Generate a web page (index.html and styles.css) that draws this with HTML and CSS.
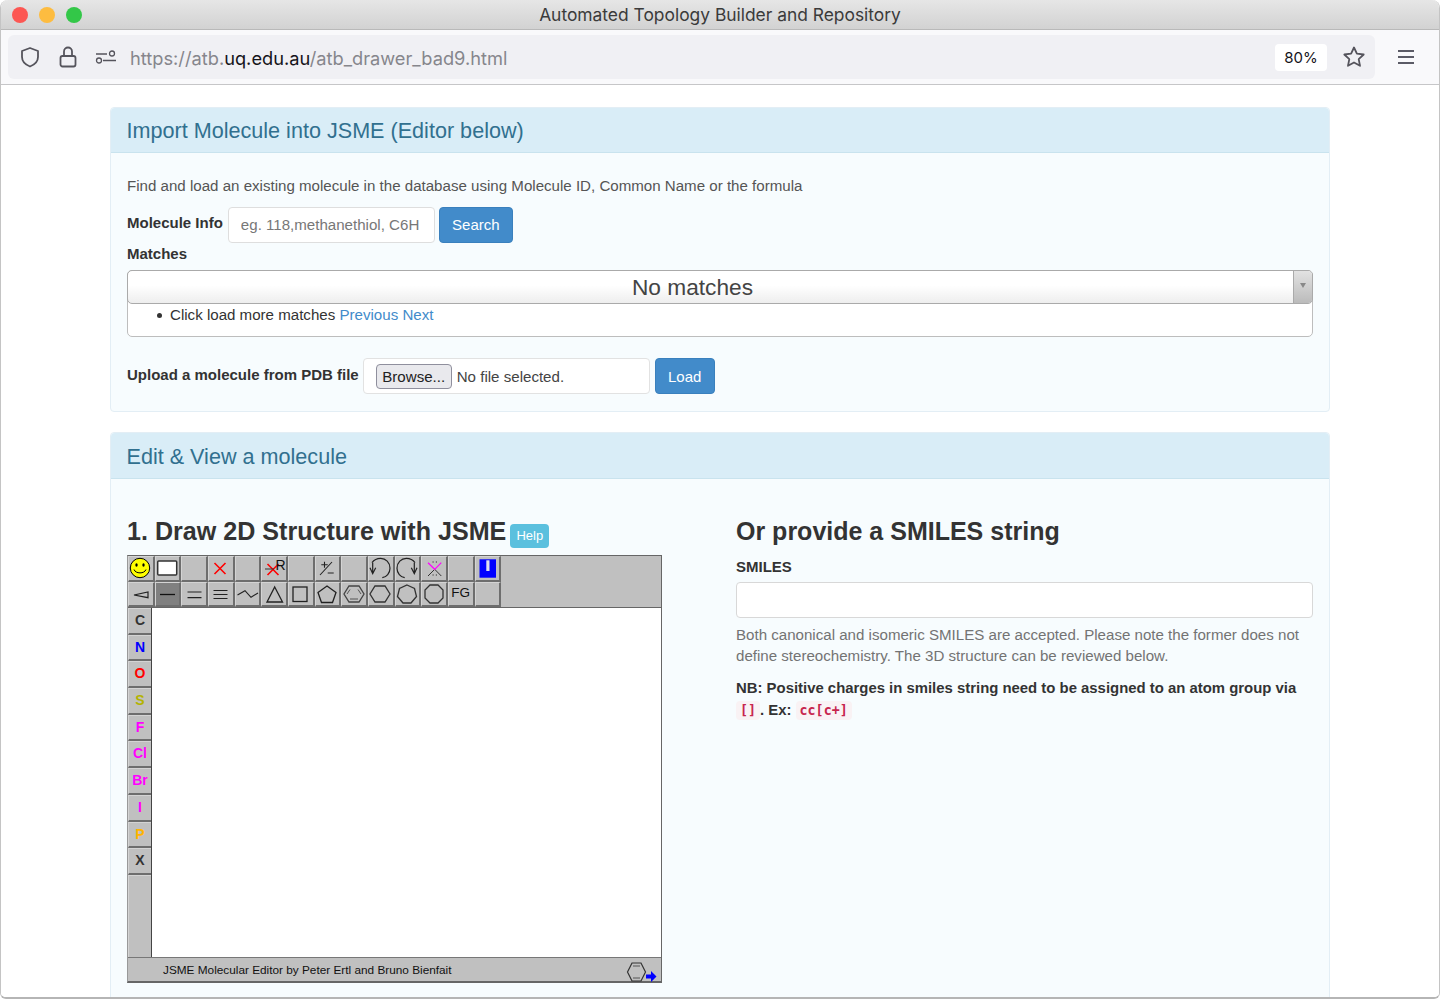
FILE: index.html
```html
<!DOCTYPE html>
<html lang="en">
<head>
    <meta charset="UTF-8">
    <title>Automated Topology Builder and Repository</title>
    <link rel="stylesheet" href="styles.css">
</head>
<body>
    <div class="window">
        <div class="titlebar">
            <div class="lights">
                <span class="light light-red"></span>
                <span class="light light-yellow"></span>
                <span class="light light-green"></span>
            </div>
            <div class="window-title">Automated Topology Builder and Repository</div>
        </div>
        <div class="toolbar">
            <div class="urlbar">
                <svg class="tool-icon" width="24" height="24" viewBox="0 0 24 24"><path d="M12 3l8 3v6c0 4.500-3.200 7.600-8 9.500C7.200 19.600 4 16.500 4 12V6z" fill="none" stroke="#55545c" stroke-width="1.800" stroke-linejoin="round"/></svg>
                <svg class="tool-icon lock" width="24" height="24" viewBox="0 0 24 24"><rect x="4.500" y="11" width="15" height="10.500" rx="2" fill="none" stroke="#55545c" stroke-width="1.800"/><path d="M8 11V6.500a4 4 0 0 1 8 0V11" fill="none" stroke="#55545c" stroke-width="1.800"/></svg>
                <svg class="tool-icon perm" width="22" height="16" viewBox="0 0 22 16"><path d="M1 5h11M8 11.500h13" stroke="#55545c" stroke-width="1.400"/><circle cx="17" cy="4.500" r="2.500" fill="none" stroke="#55545c" stroke-width="1.300"/><circle cx="4" cy="11.500" r="2.500" fill="none" stroke="#55545c" stroke-width="1.300"/></svg>
                <div class="url">https://atb.<b>uq.edu.au</b>/atb_drawer_bad9.html</div>
                <div class="zoom-level">80%</div>
                <svg class="star" width="24" height="24" viewBox="0 0 24 24"><path d="M12 2.500l2.900 6.200 6.800.8-5 4.600 1.300 6.700-6-3.300-6 3.300 1.300-6.700-5-4.600 6.800-.8z" fill="none" stroke="#55545c" stroke-width="1.800" stroke-linejoin="round"/></svg>
            </div>
            <div class="menu-btn"><span></span><span></span><span></span></div>
        </div>

        <div class="page">
            <section class="panel panel-import">
                <div class="panel-heading">Import Molecule into JSME (Editor below)</div>
                <div class="panel-body">
                    <p class="intro">Find and load an existing molecule in the database using Molecule ID, Common Name or the formula</p>
                    <div class="form-row search-row">
                        <label class="label">Molecule Info</label>
                        <input class="text-input mol-input" type="text" placeholder="eg. 118,methanethiol, C6H">
                        <button class="btn">Search</button>
                    </div>
                    <div class="label matches-label">Matches</div>
                    <div class="matches">
                        <div class="combo">
                            <div class="combo-text">No matches</div>
                            <div class="combo-arrow"><i></i></div>
                        </div>
                        <ul class="more">
                            <li>Click load more matches <a href="#">Previous</a> <a href="#">Next</a></li>
                        </ul>
                    </div>
                    <div class="form-row upload-row">
                        <label class="label">Upload a molecule from PDB file</label>
                        <div class="file-box"><span class="browse">Browse...</span><span>No file selected.</span></div>
                        <button class="btn load-btn">Load</button>
                    </div>
                </div>
            </section>

            <section class="panel panel-edit">
                <div class="panel-heading">Edit &amp; View a molecule</div>
                <div class="panel-body edit-body">
                    <div class="col-left">
                        <h3>1. Draw 2D Structure with JSME <span class="help">Help</span></h3>
                        <div class="jsme">
                            <div class="jsme-top">
                                <div class="jsme-row">
                                    <div class="cell"><svg width="24" height="24" viewBox="0 0 24 24"><circle cx="12" cy="12" r="9.700" fill="#ff0" stroke="#000"/><ellipse cx="8.500" cy="9" rx="1.200" ry="1.700"/><ellipse cx="15.500" cy="9" rx="1.200" ry="1.700"/><path d="M6 13.500c1.500 4.500 10.500 4.500 12 0" fill="none" stroke="#000"/></svg></div>
                                    <div class="cell"><svg width="24" height="24" viewBox="0 0 24 24"><rect x="2.700" y="5" width="19" height="14" rx="1" fill="#fff" stroke="#333" stroke-width="1.500"/></svg></div>
                                    <div class="cell"></div>
                                    <div class="cell"><svg width="24" height="24" viewBox="0 0 24 24"><path d="M6.500 7l11 11M17.500 7l-11 11" stroke="#f00" stroke-width="1.600"/></svg></div>
                                    <div class="cell"></div>
                                    <div class="cell"><svg width="24" height="24" viewBox="0 0 24 24"><path d="M5.500 8l11 11M16.500 8L5.500 19" stroke="#f00" stroke-width="1.600"/><path d="M3 13h9" stroke="#333"/><text x="13.500" y="14" class="cell-r">R</text></svg></div>
                                    <div class="cell"></div>
                                    <div class="cell"><svg width="24" height="24" viewBox="0 0 24 24"><path d="M9.500 5.700v6M6.300 8.700h6.400M12.700 17h6M17 6L5 19" stroke="#222" stroke-width="1.100"/></svg></div>
                                    <div class="cell"></div>
                                    <div class="cell"><svg width="24" height="24" viewBox="0 0 24 24"><path d="M4 6.700C6 3.800 9 2.300 12.700 2.300c5 0 9.300 4.400 9.300 10 0 5-3.500 8.800-7.700 9.400" fill="none" stroke="#222" stroke-width="1.200"/><path d="M4.700 6.700v11M2 11.700l2.700 6 3-6" fill="none" stroke="#222" stroke-width="1.200"/></svg></div>
                                    <div class="cell"><svg width="24" height="24" viewBox="0 0 24 24"><path d="M20 6.700C18 3.800 15 2.300 11.300 2.300c-5 0-9.300 4.400-9.300 10 0 5 3.500 8.800 7.700 9.400" fill="none" stroke="#222" stroke-width="1.200"/><path d="M19.300 6.700v11M22 11.700l-2.700 6-3-6" fill="none" stroke="#222" stroke-width="1.200"/></svg></div>
                                    <div class="cell"><svg width="24" height="24" viewBox="0 0 24 24"><path d="M12.700 13.300L6 20M12.700 13.300L19.300 20" stroke="#333"/><path d="M6 6.700l6.700 6.600 6.600-6.600" fill="none" stroke="#f0f" stroke-width="1.200"/><path d="M10.500 6h1.200M13.800 6H15M10.500 19h1.200M13.800 19H15" stroke="#333"/></svg></div>
                                    <div class="cell"></div>
                                    <div class="cell"><svg width="24" height="24" viewBox="0 0 24 24"><rect x="4.500" y="3.300" width="16.500" height="18.400" fill="#00f"/><rect x="11.300" y="4.300" width="3.200" height="10.700" fill="#dde"/></svg></div>
                                </div>
                                <div class="jsme-row">
                                    <div class="cell"><svg width="24" height="24" viewBox="0 0 24 24"><path d="M6 13l14-3v5.700z" fill="none" stroke="#222" stroke-width="1.200"/></svg></div>
                                    <div class="cell cell-on"><svg width="24" height="24" viewBox="0 0 24 24"><path d="M5 12.500h15" stroke="#111" stroke-width="1.300"/></svg></div>
                                    <div class="cell"><svg width="24" height="24" viewBox="0 0 24 24"><path d="M5.500 10h14M5.500 15.700h14" stroke="#222" stroke-width="1.200"/></svg></div>
                                    <div class="cell"><svg width="24" height="24" viewBox="0 0 24 24"><path d="M5.500 8.500h14M5.500 12.500h14M5.500 16.500h14" stroke="#222" stroke-width="1.200"/></svg></div>
                                    <div class="cell"><svg width="24" height="24" viewBox="0 0 24 24"><path d="M2.500 13l7.500-4.300 6 6.600 7-4.300" fill="none" stroke="#222" stroke-width="1.100"/></svg></div>
                                    <div class="cell"><svg width="24" height="24" viewBox="0 0 24 24"><path d="M12.700 5L20.500 20H5z" fill="none" stroke="#222" stroke-width="1.300"/></svg></div>
                                    <div class="cell"><svg width="24" height="24" viewBox="0 0 24 24"><rect x="5" y="5" width="14" height="14.500" fill="none" stroke="#222" stroke-width="1.300"/></svg></div>
                                    <div class="cell"><svg width="24" height="24" viewBox="0 0 24 24"><path d="M12 4l9 6.500-3.500 10h-11L3 10.500z" fill="none" stroke="#222" stroke-width="1.300"/></svg></div>
                                    <div class="cell"><svg width="24" height="24" viewBox="0 0 24 24"><path d="M7 4h10l5 8-5 8H7l-5-8z" fill="none" stroke="#444" stroke-width="1.300"/><path d="M8 7.500l-3 4.500M16 7.500l3 4.500M8 17h8" stroke="#555"/></svg></div>
                                    <div class="cell"><svg width="24" height="24" viewBox="0 0 24 24"><path d="M7 4h10l5 8-5 8H7l-5-8z" fill="none" stroke="#333" stroke-width="1.300"/></svg></div>
                                    <div class="cell"><svg width="24" height="24" viewBox="0 0 24 24"><path d="M12 3l7.500 3.500 2 8-5.500 6.500H8l-5.500-6.500 2-8z" fill="none" stroke="#333" stroke-width="1.300"/></svg></div>
                                    <div class="cell"><svg width="24" height="24" viewBox="0 0 24 24"><path d="M8 3h8l5 5v8l-5 5H8l-5-5V8z" fill="none" stroke="#333" stroke-width="1.300"/></svg></div>
                                    <div class="cell cell-fg">FG</div>
                                    <div class="cell"></div>
                                </div>
                            </div>
                            <div class="jsme-mid">
                                <div class="jsme-atoms">
                                    <div class="atom atom-c">C</div>
                                    <div class="atom atom-n">N</div>
                                    <div class="atom atom-o">O</div>
                                    <div class="atom atom-s">S</div>
                                    <div class="atom atom-hal">F</div>
                                    <div class="atom atom-hal">Cl</div>
                                    <div class="atom atom-hal">Br</div>
                                    <div class="atom atom-hal">I</div>
                                    <div class="atom atom-p">P</div>
                                    <div class="atom atom-c">X</div>
                                    <div class="atom atom-rest"></div>
                                </div>
                                <div class="jsme-canvas"></div>
                            </div>
                            <div class="jsme-foot">
                                <span>JSME Molecular Editor by Peter Ertl and Bruno Bienfait</span>
                                <svg width="32" height="24" viewBox="0 0 32 24"><path d="M6 5h9l4.500 9-4.500 9H6l-4.500-9z" fill="none" stroke="#333" stroke-width="1.200"/><path d="M7 8h7M7 20h7" stroke="#555"/><path d="M20 16.500h5V13l5.500 5.500-5.500 5.500v-3.500h-5z" fill="#00f"/></svg>
                            </div>
                        </div>
                    </div>
                    <div class="col-right">
                        <h3>Or provide a SMILES string</h3>
                        <div class="label smiles-label">SMILES</div>
                        <input class="text-input smiles-input" type="text">
                        <p class="hint">Both canonical and isomeric SMILES are accepted. Please note the former does not define stereochemistry. The 3D structure can be reviewed below.</p>
                        <p class="note">NB: Positive charges in smiles string need to be assigned to an atom group via <code>[]</code>. Ex: <code>cc[c+]</code></p>
                    </div>
                </div>
            </section>
        </div>
    </div>
</body>
</html>
```

FILE: styles.css
```css
html, body {
    margin: 0;
    height: 100%;
    overflow: hidden;
}

body {
    font-family: "Liberation Sans", Arial, sans-serif;
    font-size: 15.100px;
    color: #333;
    background-color: #fff;
}

.window {
    height: 999px;
    box-sizing: border-box;
    border: 1px solid #c4c4c4;
    border-top: none;
    border-bottom: 2px solid #b5b5b5;
    border-radius: 8px 8px 6px 6px;
    overflow: hidden;
}

/* browser chrome */
.titlebar {
    height: 30px;
    display: grid;
    grid-template-columns: 1fr auto 1fr;
    align-items: center;
    box-sizing: border-box;
    background: linear-gradient(#e6e6e6, #d2d2d2);
    border-bottom: 1px solid #b9b9b9;
}

.lights {
    padding: 1px 0 0 11px;
    display: flex;
    gap: 11px;
}

.light {
    width: 16px;
    height: 16px;
    border-radius: 50%;
}

.light-red { background-color: #fc5753; }
.light-yellow { background-color: #fdbc40; }
.light-green { background-color: #33c748; }

.window-title {
    font-family: "Inter", "Liberation Sans", sans-serif;
    font-size: 17.400px;
    color: #3b3b3b;
}

.toolbar {
    height: 55px;
    box-sizing: border-box;
    padding: 5px 0 5px 7px;
    display: flex;
    align-items: center;
    background-color: #f9f9fb;
    border-bottom: 1px solid #c6c6c8;
}

.urlbar {
    width: 1367px;
    height: 44px;
    box-sizing: border-box;
    padding: 0 9px 0 10px;
    display: flex;
    align-items: center;
    background-color: #f0f0f4;
    border-radius: 6px;
}

.tool-icon { flex: none; }
.lock { margin-left: 14px; }
.perm { margin-left: 15px; }

.url {
    margin: 1px 0 0 13px;
    flex: 1;
    font-family: "Inter", "Liberation Sans", sans-serif;
    font-size: 18.250px;
    color: #86868c;
}

.url b {
    font-weight: 400;
    color: #15141a;
}

.zoom-level {
    width: 52px;
    height: 27px;
    line-height: 27px;
    text-align: center;
    font-family: "Inter", "Liberation Sans", sans-serif;
    font-size: 15px;
    color: #15141a;
    background-color: #fff;
    border-radius: 4px;
}

.star { margin-left: 15px; }

.menu-btn {
    margin-left: 23px;
    width: 16px;
    display: flex;
    flex-direction: column;
    gap: 4px;
}

.menu-btn span {
    height: 2px;
    background-color: #5b5b66;
}

/* page */
.page {
    padding: 22px 109px 0;
    background-color: #fff;
}

.panel {
    background-color: #f7fcfe;
    border: 1px solid #e3eef5;
    border-radius: 4px;
}

.panel-import { height: 305px; box-sizing: border-box; }

.panel-edit {
    margin-top: 20px;
    height: 600px;
}

.panel-heading {
    height: 44px;
    line-height: 46px;
    padding-left: 15.500px;
    font-size: 21.600px;
    color: #31708f;
    background-color: #d9edf7;
    border-bottom: 1px solid #c9e3ee;
    border-radius: 4px 4px 0 0;
}

.panel-edit .panel-heading {
    height: 45px;
    line-height: 47px;
}

.panel-body {
    padding: 0 16px;
}

.intro {
    margin: 0;
    padding-top: 25px;
    line-height: 16px;
    color: #555;
}

.form-row {
    display: flex;
    align-items: flex-start;
}

.search-row {
    margin-top: 13px;
}

.label {
    font-size: 15px;
    font-weight: 700;
    color: #333;
    line-height: 17px;
}

.search-row .label {
    margin-top: 7px;
    margin-right: 5px;
}

.text-input {
    box-sizing: border-box;
    height: 36px;
    padding: 0 12px 2px;
    font-family: inherit;
    font-size: 15.100px;
    background-color: #fff;
    border: 1px solid #dedede;
    border-radius: 4px;
}

.text-input::placeholder {
    color: #777;
    opacity: 1;
}

.mol-input {
    width: 207px;
}

.btn {
    margin-left: 4px;
    height: 36px;
    width: 74px;
    padding: 0 0 2px;
    font-family: inherit;
    font-size: 15px;
    color: #fff;
    background-color: #428bca;
    border: 1px solid #3a80bd;
    border-radius: 4px;
}

.matches-label {
    margin-top: 2px;
}

.matches {
    margin-top: 8px;
    height: 67px;
    box-sizing: border-box;
    border: 1px solid #bdbdbd;
    border-radius: 5px;
    background-color: #fff;
}

.combo {
    margin: -1px;
    height: 34px;
    display: flex;
    box-sizing: border-box;
    border: 1px solid #aaa;
    border-radius: 5px;
    background: linear-gradient(#fff 45%, #eee);
    overflow: hidden;
}

.combo-text {
    flex: 1;
    padding-right: 36px;
    line-height: 33px;
    text-align: center;
    font-size: 22.700px;
    color: #444;
}

.combo-arrow {
    width: 19px;
    border-left: 1px solid #aaa;
    background: linear-gradient(#e2e2e2, #bbb);
    display: flex;
    justify-content: center;
    padding-top: 12px;
    box-sizing: border-box;
}

.combo-arrow i {
    width: 0;
    height: 0;
    border: 3.500px solid transparent;
    border-top: 5px solid #888;
}

.more {
    margin: 0;
    padding: 3px 0 0 42px;
    line-height: 17px;
    color: #333;
    list-style: none;
}

.more li::before {
    content: "";
    display: inline-block;
    width: 5px;
    height: 5px;
    margin: 0 8px 2px -13px;
    border-radius: 50%;
    background-color: #333;
}

.more a {
    color: #428bca;
    text-decoration: none;
}

.upload-row {
    margin-top: 21px;
}

.upload-row .label {
    margin-top: 8px;
    margin-right: 4px;
}

.file-box {
    box-sizing: border-box;
    width: 287px;
    height: 36px;
    padding-left: 12px;
    display: flex;
    align-items: center;
    gap: 5px;
    background-color: #fff;
    border: 1px solid #e2e2e2;
    border-radius: 4px;
    color: #444;
}

.browse {
    box-sizing: border-box;
    width: 76px;
    height: 25px;
    line-height: 23px;
    text-align: center;
    color: #222;
    background-color: #e9e9ed;
    border: 1px solid #8f8f9d;
    border-radius: 4px;
}

.load-btn {
    margin-left: 5px;
    width: 60px;
    height: 36px;
    padding: 0;
}

.edit-body {
    display: flex;
}

.col-left {
    width: 609px;
    flex: none;
}

.col-right {
    width: 577px;
    flex: none;
}

h3 {
    margin: 35px 0 0;
    height: 34px;
    line-height: 34px;
    font-size: 25px;
    font-weight: 700;
    color: #333;
}

.col-left h3 {
    display: flex;
    align-items: center;
    gap: 4px;
    font-size: 25.100px;
}

.help {
    margin-top: 9px;
    width: 39px;
    height: 24px;
    line-height: 24px;
    text-align: center;
    font-size: 13px;
    font-weight: 400;
    color: #fff;
    background-color: #5bc0de;
    border-radius: 4px;
}

/* jsme applet */
.jsme {
    margin-top: 7px;
    width: 535px;
    height: 428px;
    box-sizing: border-box;
    display: flex;
    flex-direction: column;
    background-color: #c0c0c0;
    border: 1px solid #666;
    border-left-color: #999;
    border-bottom-width: 2px;
}

.jsme-top {
    height: 52px;
    flex: none;
    box-sizing: border-box;
    display: flex;
    flex-direction: column;
    border-bottom: 1px solid #666;
}

.jsme-row {
    display: flex;
    height: 25.500px;
}

.cell {
    box-sizing: border-box;
    width: 26.670px;
    height: 25.500px;
    flex: none;
    display: flex;
    align-items: center;
    justify-content: center;
    background-color: #c0c0c0;
    border-style: solid;
    border-width: 1px 2px 2px 1px;
    border-color: #d4d4d4 #6e6e6e #6e6e6e #d4d4d4;
}

.cell-on {
    background-color: #808080;
}

.cell svg {
    display: block;
    flex: none;
    margin-left: -1px;
}

.cell-r {
    font-size: 14px;
    fill: #111;
}

.cell-fg {
    padding-bottom: 3px;
    font-size: 13.500px;
    color: #111;
}

.jsme-mid {
    flex: 1;
    display: flex;
    min-height: 0;
}

.jsme-atoms {
    width: 23px;
    flex: none;
    display: flex;
    flex-direction: column;
    border-right: 1px solid #444;
}

.atom {
    box-sizing: border-box;
    height: 26.700px;
    flex: none;
    line-height: 22px;
    text-align: center;
    font-size: 14px;
    font-weight: 700;
    background-color: #c0c0c0;
    border-style: solid;
    border-width: 1px 0 2px 1px;
    border-color: #d4d4d4 #6e6e6e #6e6e6e #d4d4d4;
}

.atom-c { color: #333; }
.atom-n { color: #00f; }
.atom-o { color: #f00; }
.atom-s { color: #b3b300; }
.atom-hal { color: #f0f; }
.atom-p { color: #ffb400; }

.atom-rest {
    flex: 1;
    border-bottom: none;
}

.jsme-canvas {
    flex: 1;
    background-color: #fff;
}

.jsme-foot {
    height: 24px;
    flex: none;
    padding: 0 3px 0 35px;
    display: flex;
    align-items: center;
    justify-content: space-between;
    font-size: 11.800px;
    color: #111;
    border-top: 1px solid #777;
    box-sizing: border-box;
}

/* smiles column */
.smiles-label {
    margin-top: 10px;
}

.smiles-input {
    display: block;
    margin-top: 7px;
    width: 100%;
    border-color: #d8d8d8;
}

.hint {
    margin: 6px 0 0;
    line-height: 21px;
    color: #737373;
}

.note {
    margin: 11px 0 0;
    line-height: 22px;
    font-size: 14.900px;
    font-weight: 700;
    color: #333;
}

code {
    padding: 2px 4px;
    font-family: "DejaVu Sans Mono", "Liberation Mono", monospace;
    font-size: 13.300px;
    color: #c7254e;
    background-color: #f9f2f4;
    border-radius: 4px;
}
```
